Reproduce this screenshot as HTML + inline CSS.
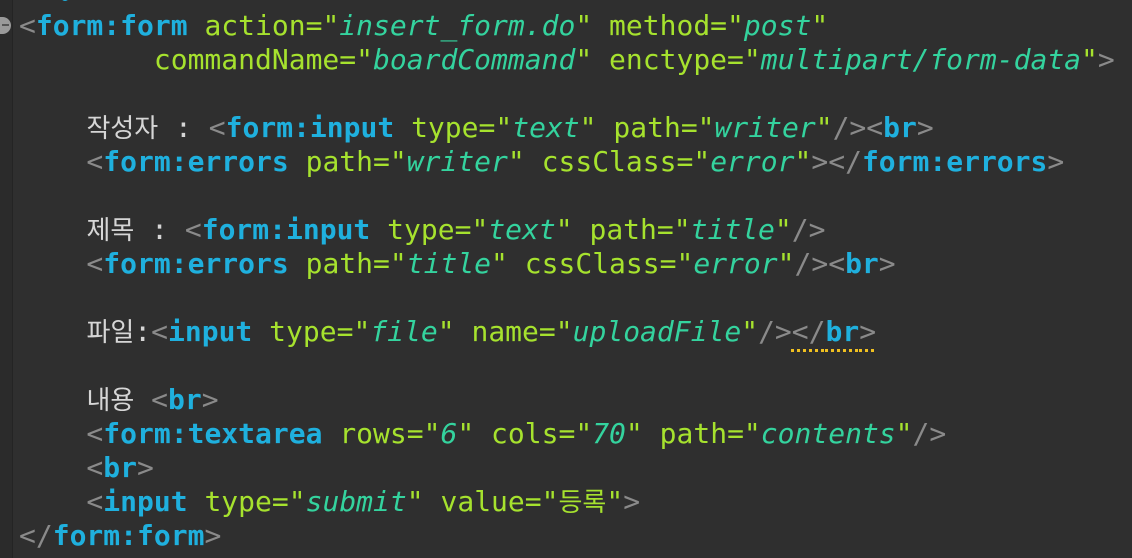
<!DOCTYPE html>
<html><head><meta charset="utf-8"><style>
html,body{margin:0;padding:0;background:#2f2f2f;width:1132px;height:558px;overflow:hidden}
.g{position:absolute;left:0;top:0;width:12px;height:558px;background:#2b2b2b;border-right:1px solid #242424}
.dot{position:absolute;left:0;top:17px;width:11px;height:17px;border-radius:0 9px 9px 0;background:#9a9a9a}
.dot:after{content:"";position:absolute;left:2px;top:7px;width:7px;height:2px;background:#555}
pre{position:absolute;left:19px;top:-25px;margin:0;font-family:"DejaVu Sans Mono","Liberation Mono",monospace;font-size:28px;line-height:34px;color:#8a8a8a;white-space:pre}
.t{color:#1fb0de;font-weight:bold}
.a{color:#a6e22e}
.s{color:#34d39e;font-style:italic}
.k{color:#d6d6d6;font-family:"Noto Sans CJK KR",sans-serif;font-size:26px;line-height:0}
.w{color:#d6d6d6}
.u{text-decoration:underline dotted #f0c020 3px;text-underline-offset:8px}
</style></head><body>
<div class="g"></div><div class="dot"></div>
<pre>  <span class="t">%</span>
&lt;<span class="t">form:form</span> <span class="a">action="</span><span class="s">insert_form.do</span><span class="a">"</span> <span class="a">method="</span><span class="s">post</span><span class="a">"</span>
        <span class="a">commandName="</span><span class="s">boardCommand</span><span class="a">"</span> <span class="a">enctype="</span><span class="s">multipart/form-data</span><span class="a">"</span>&gt;

    <span class="k">작성자</span><span class="w"> : </span>&lt;<span class="t">form:input</span> <span class="a">type="</span><span class="s">text</span><span class="a">"</span> <span class="a">path="</span><span class="s">writer</span><span class="a">"</span>/&gt;&lt;<span class="t">br</span>&gt;
    &lt;<span class="t">form:errors</span> <span class="a">path="</span><span class="s">writer</span><span class="a">"</span> <span class="a">cssClass="</span><span class="s">error</span><span class="a">"</span>&gt;&lt;/<span class="t">form:errors</span>&gt;

    <span class="k">제목</span><span class="w"> : </span>&lt;<span class="t">form:input</span> <span class="a">type="</span><span class="s">text</span><span class="a">"</span> <span class="a">path="</span><span class="s">title</span><span class="a">"</span>/&gt;
    &lt;<span class="t">form:errors</span> <span class="a">path="</span><span class="s">title</span><span class="a">"</span> <span class="a">cssClass="</span><span class="s">error</span><span class="a">"</span>/&gt;&lt;<span class="t">br</span>&gt;

    <span class="k">파일</span><span class="w">:</span>&lt;<span class="t">input</span> <span class="a">type="</span><span class="s">file</span><span class="a">"</span> <span class="a">name="</span><span class="s">uploadFile</span><span class="a">"</span>/&gt;<span class="u">&lt;/<span class="t">br</span>&gt;</span>

    <span class="k">내용</span> &lt;<span class="t">br</span>&gt;
    &lt;<span class="t">form:textarea</span> <span class="a">rows="</span><span class="s">6</span><span class="a">"</span> <span class="a">cols="</span><span class="s">70</span><span class="a">"</span> <span class="a">path="</span><span class="s">contents</span><span class="a">"</span>/&gt;
    &lt;<span class="t">br</span>&gt;
    &lt;<span class="t">input</span> <span class="a">type="</span><span class="s">submit</span><span class="a">"</span> <span class="a">value="</span><span class="k" style="color:#a6e22e">등록</span><span class="a">"</span>&gt;
&lt;/<span class="t">form:form</span>&gt;</pre>
</body></html>
